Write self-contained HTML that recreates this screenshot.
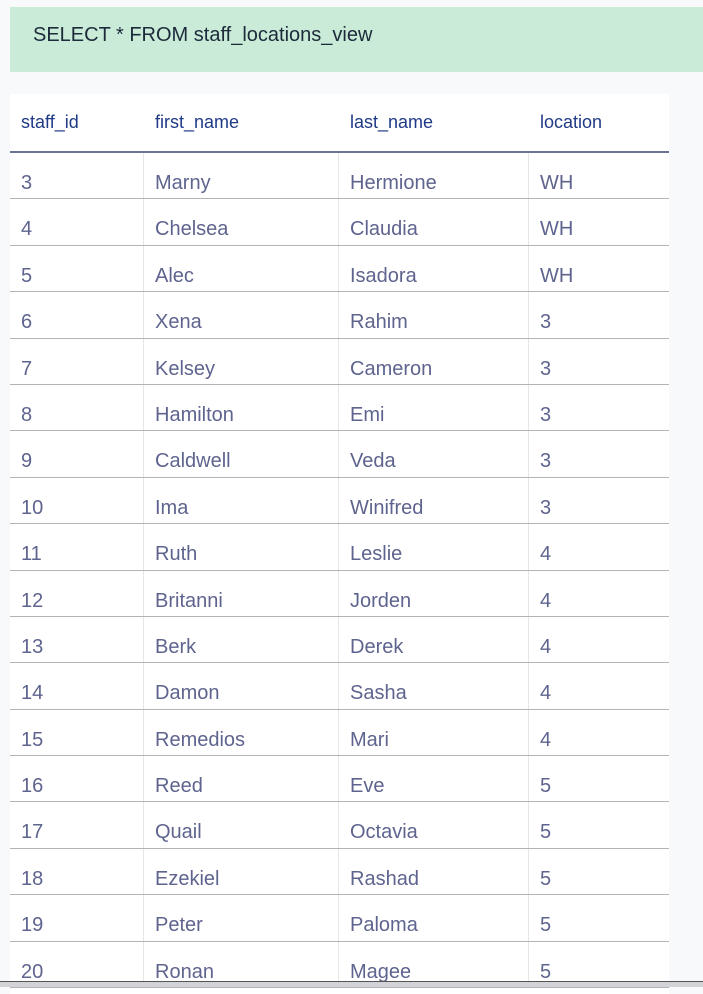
<!DOCTYPE html>
<html><head><meta charset="utf-8"><style>
*{margin:0;padding:0;box-sizing:border-box}
body{width:703px;height:987px;overflow:hidden;background:#f8f9fb;font-family:"Liberation Sans",Arial,sans-serif;position:relative}
.q{position:absolute;left:10px;top:7px;width:693px;height:65px;background:#c9ebd8;color:#1c2a3a;font-size:20px;padding:17px 0 0 23px}
.t{position:absolute;left:10px;top:94px;width:659px;height:900px;background:#fff}
.h{height:59px;border-bottom:2px solid #6b7394;display:flex;color:#1f3a86;font-size:18px}
.h div{padding-top:18px;padding-left:11px}
.r{height:46.4px;border-bottom:1px solid #b3b3b3;display:flex;color:#5e648e;font-size:20px}
.r div{padding-top:20px;padding-left:11px;border-right:1px solid #e6e6e6;line-height:20px}
.c1{width:134px}.c2{width:195px}.c3{width:190px}.c4{width:140px;border-right:none!important}
.b{position:absolute;left:0;top:981px;width:703px;height:6px;background:#d2d3d6;border-top:1.5px solid #555}
</style></head><body>
<div class="q">SELECT * FROM staff_locations_view</div>
<div class="t">
<div class="h"><div class="c1">staff_id</div><div class="c2">first_name</div><div class="c3">last_name</div><div class="c4">location</div></div>
<div class="r"><div class="c1">3</div><div class="c2">Marny</div><div class="c3">Hermione</div><div class="c4">WH</div></div>
<div class="r"><div class="c1">4</div><div class="c2">Chelsea</div><div class="c3">Claudia</div><div class="c4">WH</div></div>
<div class="r"><div class="c1">5</div><div class="c2">Alec</div><div class="c3">Isadora</div><div class="c4">WH</div></div>
<div class="r"><div class="c1">6</div><div class="c2">Xena</div><div class="c3">Rahim</div><div class="c4">3</div></div>
<div class="r"><div class="c1">7</div><div class="c2">Kelsey</div><div class="c3">Cameron</div><div class="c4">3</div></div>
<div class="r"><div class="c1">8</div><div class="c2">Hamilton</div><div class="c3">Emi</div><div class="c4">3</div></div>
<div class="r"><div class="c1">9</div><div class="c2">Caldwell</div><div class="c3">Veda</div><div class="c4">3</div></div>
<div class="r"><div class="c1">10</div><div class="c2">Ima</div><div class="c3">Winifred</div><div class="c4">3</div></div>
<div class="r"><div class="c1">11</div><div class="c2">Ruth</div><div class="c3">Leslie</div><div class="c4">4</div></div>
<div class="r"><div class="c1">12</div><div class="c2">Britanni</div><div class="c3">Jorden</div><div class="c4">4</div></div>
<div class="r"><div class="c1">13</div><div class="c2">Berk</div><div class="c3">Derek</div><div class="c4">4</div></div>
<div class="r"><div class="c1">14</div><div class="c2">Damon</div><div class="c3">Sasha</div><div class="c4">4</div></div>
<div class="r"><div class="c1">15</div><div class="c2">Remedios</div><div class="c3">Mari</div><div class="c4">4</div></div>
<div class="r"><div class="c1">16</div><div class="c2">Reed</div><div class="c3">Eve</div><div class="c4">5</div></div>
<div class="r"><div class="c1">17</div><div class="c2">Quail</div><div class="c3">Octavia</div><div class="c4">5</div></div>
<div class="r"><div class="c1">18</div><div class="c2">Ezekiel</div><div class="c3">Rashad</div><div class="c4">5</div></div>
<div class="r"><div class="c1">19</div><div class="c2">Peter</div><div class="c3">Paloma</div><div class="c4">5</div></div>
<div class="r"><div class="c1">20</div><div class="c2">Ronan</div><div class="c3">Magee</div><div class="c4">5</div></div>
</div>
<div class="b"></div>
</body></html>
